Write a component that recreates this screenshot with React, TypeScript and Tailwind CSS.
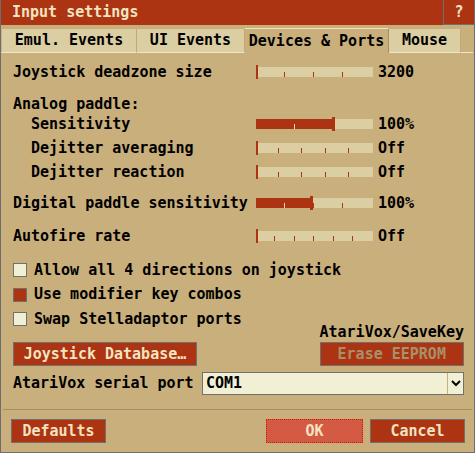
import React from "react";

const RED = "bg-[#ac3412]";

type Tick = { left: string; light?: boolean };

function Slider({ fill, handle, ticks }: { fill?: string; handle?: string; ticks: Tick[] }) {
  return (
    <div className="relative w-[117px] h-[10px] bg-[#dccea3]">
      {fill && <div className={`absolute left-0 top-0 h-full ${fill} ${RED}`} />}
      {ticks.map((t, i) => (
        <div
          key={i}
          className={`absolute bottom-0 w-px h-[5px] ${t.left} ${t.light ? "bg-[#e8d8b0]" : "bg-[#ac3412]"}`}
        />
      ))}
      <div className={`absolute -top-[2px] h-[14px] ${handle ?? "left-0 w-[2px]"} ${RED}`} />
    </div>
  );
}

function SliderRow({
  label,
  value,
  indent,
  children,
}: {
  label: string;
  value: string;
  indent?: boolean;
  children: React.ReactNode;
}) {
  return (
    <div className="flex items-center h-[24px]">
      <div className={`w-[243px] ${indent ? "pl-[18px]" : ""}`}>{label}</div>
      {children}
      <span className="ml-[5px]">{value}</span>
    </div>
  );
}

function Check({ label, checked, h = "h-[24px]" }: { label: string; checked?: boolean; h?: string }) {
  return (
    <div className={`flex items-center ${h}`}>
      <div
        className={`w-[14px] h-[14px] border border-[#707070] ${checked ? "bg-[#ac3412]" : "bg-[#f0f0d4]"}`}
      />
      <span className="ml-[7px]">{label}</span>
    </div>
  );
}

export default function App() {
  const tabs = [
    { name: "Emul. Events", w: "w-[135px]" },
    { name: "UI Events", w: "w-[108px]" },
    { name: "Devices & Ports", w: "w-[144px]", active: true },
    { name: "Mouse", w: "w-[72px]" },
  ];

  return (
    <div className="w-[475px] h-[453px] bg-[#c9af7c] border-l border-r border-b border-[#6e6e6e] flex flex-col text-[15px] font-bold text-black font-['DejaVu_Sans_Mono','Liberation_Mono',monospace] leading-none">
      {/* title bar */}
      <div className={`flex h-[25px] ${RED} text-[#f2e4c0]`}>
        <div className="flex-1 flex items-center pl-[11px]">Input settings</div>
        <div className="w-[31px] flex items-center justify-center border-l border-b border-[#6e6e6e]">?</div>
      </div>

      {/* tabs */}
      <div className="flex items-end h-[28px]">
        <div className="w-[1px] h-px bg-[#f0e6c0]" />
        {tabs.map((t) =>
          t.active ? (
            <div
              key={t.name}
              className={`${t.w} h-[25px] flex items-center justify-center border-t border-[#f0e6c0] border-r-[#a88f60] border-r`}
            >
              {t.name}
            </div>
          ) : (
            <div
              key={t.name}
              className={`${t.w} h-[24px] flex items-center justify-center bg-[#dccea3] border-b border-[#f0e6c0] border-r border-r-[#c4a877]`}
            >
              {t.name}
            </div>
          )
        )}
        <div className="flex-1 h-px bg-[#f0e6c0] mr-[1px]" />
      </div>

      {/* content */}
      <div className="flex flex-col pl-[12px] pr-[10px]">
        <div className="mt-[7px]">
          <SliderRow label="Joystick deadzone size" value="3200">
            <Slider ticks={[{ left: "left-[28px]" }, { left: "left-[57px]" }, { left: "left-[86px]" }]} />
          </SliderRow>
        </div>

        <div className="mt-[12px] h-[16px] flex items-center">Analog paddle:</div>
        <SliderRow label="Sensitivity" value="100%" indent>
          <Slider
            fill="w-[77px]"
            handle="left-[76px] w-[3px]"
            ticks={[{ left: "left-[38px]", light: true }]}
          />
        </SliderRow>
        <SliderRow label="Dejitter averaging" value="Off" indent>
          <Slider
            ticks={[
              { left: "left-[22px]" },
              { left: "left-[45px]" },
              { left: "left-[69px]" },
              { left: "left-[92px]" },
            ]}
          />
        </SliderRow>
        <SliderRow label="Dejitter reaction" value="Off" indent>
          <Slider
            ticks={[
              { left: "left-[22px]" },
              { left: "left-[45px]" },
              { left: "left-[69px]" },
              { left: "left-[92px]" },
            ]}
          />
        </SliderRow>

        <div className="mt-[7px]">
          <SliderRow label="Digital paddle sensitivity" value="100%">
            <Slider
              fill="w-[55px]"
              handle="left-[54px] w-[3px]"
              ticks={[{ left: "left-[28px]", light: true }, { left: "left-[57px]" }, { left: "left-[86px]" }]}
            />
          </SliderRow>
        </div>

        <div className="mt-[9px]">
          <SliderRow label="Autofire rate" value="Off">
            <Slider
              ticks={[
                { left: "left-[18px]" },
                { left: "left-[38px]" },
                { left: "left-[57px]" },
                { left: "left-[77px]" },
                { left: "left-[96px]" },
              ]}
            />
          </SliderRow>
        </div>

        <div className="mt-[10px] flex flex-col">
          <Check label="Allow all 4 directions on joystick" />
          <Check label="Use modifier key combos" checked h="h-[25px]" />
          <Check label="Swap Stelladaptor ports" />
        </div>

        <div className="flex items-end justify-between h-[35px]">
          <button className={`w-[184px] h-[24px] ${RED} border border-[#707070] text-[#f2e4c0]`}>
            Joystick Database…
          </button>
          <div className="flex flex-col items-center -mt-[6px]">
            <div className="h-[14px] flex items-center">AtariVox/SaveKey</div>
            <button className={`mt-[3px] w-[144px] h-[24px] ${RED} border border-[#707070] text-[#a8906a]`}>
              Erase EEPROM
            </button>
          </div>
        </div>

        <div className="mt-[6px] h-[23px] flex items-center">
          <div className="w-[189px]">AtariVox serial port</div>
          <div className="flex-1 h-full flex border border-[#707070] bg-[#f2f0d4]">
            <div className="flex-1 flex items-center pl-[3px]">COM1</div>
            <div className="w-[16px] border-l border-[#c9af7c] flex items-center justify-center">
              <svg width="10" height="7" viewBox="0 0 10 7">
                <polyline points="1,1 5,5 9,1" fill="none" stroke="#000" strokeWidth="2" />
              </svg>
            </div>
          </div>
        </div>
      </div>

      <div className="mt-[14px] mx-[2px] h-px bg-[#a68e63]" />

      <div className="mt-[9px] flex items-center pl-[10px] pr-[9px] text-[#f2e4c0]">
        <button className={`w-[95px] h-[24px] ${RED} border border-[#707070]`}>Defaults</button>
        <div className="flex-1" />
        <button className="w-[97px] h-[24px] bg-[#d55a43] border border-dotted border-[#d01818]">OK</button>
        <button className={`ml-[7px] w-[95px] h-[24px] ${RED} border border-[#707070]`}>Cancel</button>
      </div>
    </div>
  );
}
